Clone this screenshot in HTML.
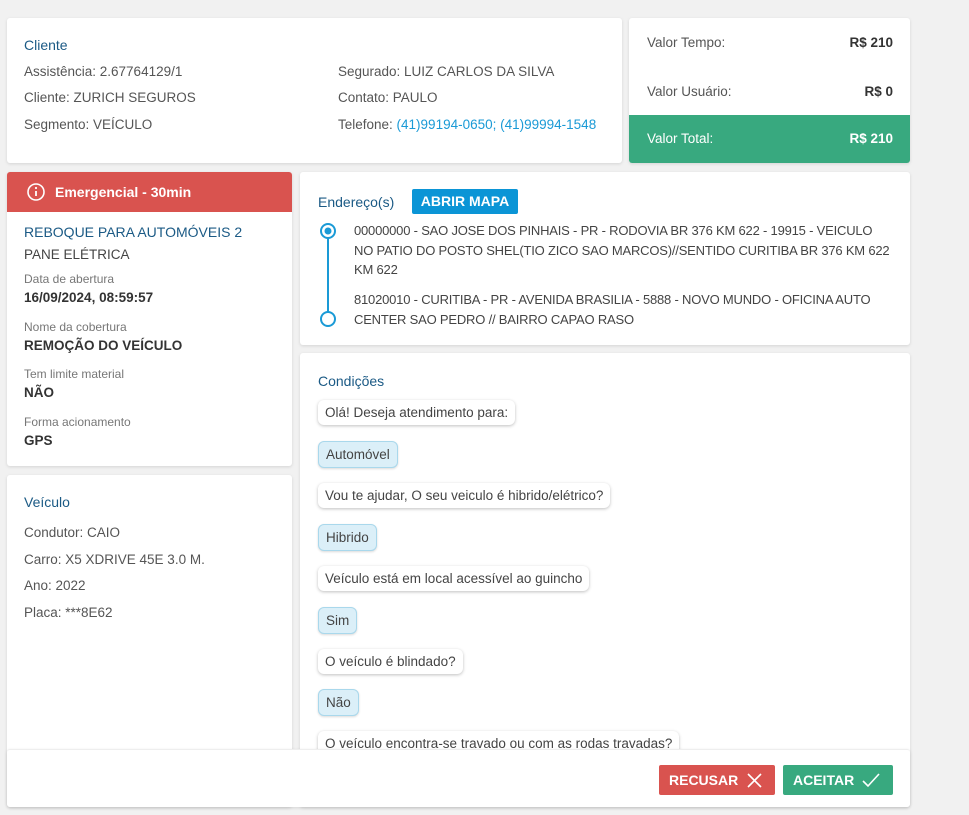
<!DOCTYPE html>
<html><head><meta charset="utf-8"><style>
*{box-sizing:border-box;margin:0;padding:0}
body{width:969px;height:815px;background:#f1f1f1;font-family:"Liberation Sans",sans-serif;font-size:13.5px;color:#555;position:relative;overflow:hidden}
.card{position:absolute;background:#fff;border-radius:3px;box-shadow:0 1px 3px rgba(0,0,0,.12)}
.t{position:absolute;white-space:nowrap}
.h{color:#1b5a85;font-size:14px}
.lbl{font-size:12px;color:#777}
.b{font-weight:bold;color:#333}
.link{color:#1a9ad6}
.bub{position:absolute;left:18px;padding:5px 7px;background:#fff;border-radius:6px;box-shadow:0 1px 3px rgba(0,0,0,.25);color:#444;white-space:nowrap}
.rep{background:#dbeff8;border:1px solid #a9d8ec;box-shadow:0 1px 2px rgba(0,0,0,.15)}
.addr{position:absolute;left:54px;width:538px;line-height:19.5px;color:#444;font-size:13px;letter-spacing:-0.2px}
</style></head><body>

<div class="card" style="left:7px;top:18px;width:615px;height:145px">
<div class="t h" style="left:17px;top:19px">Cliente</div>
<div class="t" style="left:17px;top:46px">Assistência: 2.67764129/1</div>
<div class="t" style="left:17px;top:72px">Cliente: ZURICH SEGUROS</div>
<div class="t" style="left:17px;top:99px">Segmento: VEÍCULO</div>
<div class="t" style="left:331px;top:46px">Segurado: LUIZ CARLOS DA SILVA</div>
<div class="t" style="left:331px;top:72px">Contato: PAULO</div>
<div class="t" style="left:331px;top:99px">Telefone: <span class="link">(41)99194-0650; (41)99994-1548</span></div>
</div>

<div class="card" style="left:629px;top:18px;width:281px;height:145px;overflow:hidden">
<div class="t" style="left:18px;top:17px">Valor Tempo:</div>
<div class="t b" style="right:17px;top:17px">R$ 210</div>
<div class="t" style="left:18px;top:66px">Valor Usuário:</div>
<div class="t b" style="right:17px;top:66px">R$ 0</div>
<div style="position:absolute;left:0;top:97px;width:281px;height:48px;background:#38a97f">
<div class="t" style="left:18px;top:16px;color:#fff">Valor Total:</div>
<div class="t" style="right:17px;top:16px;color:#fff;font-weight:bold">R$ 210</div>
</div>
</div>

<div class="card" style="left:7px;top:172px;width:285px;height:294px;overflow:hidden">
<div style="position:absolute;left:0;top:0;width:285px;height:40px;background:#d9534f">
<svg style="position:absolute;left:19px;top:10px" width="20" height="20" viewBox="0 0 20 20"><circle cx="10" cy="10" r="8" fill="none" stroke="#fff" stroke-width="1.6"/><line x1="10" y1="9" x2="10" y2="14" stroke="#fff" stroke-width="1.8"/><circle cx="10" cy="6" r="1.1" fill="#fff"/></svg>
<div class="t" style="left:48px;top:12px;color:#fff;font-weight:bold;font-size:14px">Emergencial - 30min</div>
</div>
<div class="t h" style="left:17px;top:52px">REBOQUE PARA AUTOMÓVEIS 2</div>
<div class="t" style="left:17px;top:75px;color:#444">PANE ELÉTRICA</div>
<div class="t lbl" style="left:17px;top:100px">Data de abertura</div>
<div class="t b" style="left:17px;top:118px">16/09/2024, 08:59:57</div>
<div class="t lbl" style="left:17px;top:148px">Nome da cobertura</div>
<div class="t b" style="left:17px;top:166px">REMOÇÃO DO VEÍCULO</div>
<div class="t lbl" style="left:17px;top:195px">Tem limite material</div>
<div class="t b" style="left:17px;top:213px">NÃO</div>
<div class="t lbl" style="left:17px;top:243px">Forma acionamento</div>
<div class="t b" style="left:17px;top:261px">GPS</div>
</div>

<div class="card" style="left:7px;top:475px;width:285px;height:332px">
<div class="t h" style="left:17px;top:19px">Veículo</div>
<div class="t" style="left:17px;top:50px">Condutor: CAIO</div>
<div class="t" style="left:17px;top:77px">Carro: X5 XDRIVE 45E 3.0 M.</div>
<div class="t" style="left:17px;top:103px">Ano: 2022</div>
<div class="t" style="left:17px;top:130px">Placa: ***8E62</div>
</div>

<div class="card" style="left:300px;top:172px;width:610px;height:173px">
<div class="t h" style="left:18px;top:22px">Endereço(s)</div>
<div style="position:absolute;left:112px;top:17px;width:106px;height:25px;background:#0b95d6;border-radius:2px;color:#fff;font-weight:bold;font-size:14px;text-align:center;line-height:25px">ABRIR MAPA</div>
<svg style="position:absolute;left:19px;top:50px" width="20" height="106"><circle cx="9" cy="9" r="7" fill="#fff" stroke="#1a9ad6" stroke-width="2"/><circle cx="9" cy="9" r="3.5" fill="#1a9ad6"/><line x1="9" y1="16" x2="9" y2="90" stroke="#1a9ad6" stroke-width="2"/><circle cx="9" cy="97" r="7" fill="#fff" stroke="#1a9ad6" stroke-width="2"/></svg>
<div class="addr" style="top:49px">00000000 - SAO JOSE DOS PINHAIS - PR - RODOVIA BR 376 KM 622 - 19915 - VEICULO NO PATIO DO POSTO SHEL(TIO ZICO SAO MARCOS)//SENTIDO CURITIBA BR 376 KM 622 KM 622</div>
<div class="addr" style="top:118px">81020010 - CURITIBA - PR - AVENIDA BRASILIA - 5888 - NOVO MUNDO - OFICINA AUTO CENTER SAO PEDRO // BAIRRO CAPAO RASO</div>
</div>

<div class="card" style="left:300px;top:353px;width:610px;height:454px;overflow:hidden">
<div class="t h" style="left:18px;top:20px">Condições</div>
<div class="bub" style="top:47px">Olá! Deseja atendimento para:</div>
<div class="bub rep" style="top:88px">Automóvel</div>
<div class="bub" style="top:130px">Vou te ajudar, O seu veiculo é hibrido/elétrico?</div>
<div class="bub rep" style="top:171px">Hibrido</div>
<div class="bub" style="top:213px">Veículo está em local acessível ao guincho</div>
<div class="bub rep" style="top:254px">Sim</div>
<div class="bub" style="top:296px">O veículo é blindado?</div>
<div class="bub rep" style="top:336px">Não</div>
<div class="bub" style="top:378px">O veículo encontra-se travado ou com as rodas travadas?</div>
</div>

<div class="card" style="left:7px;top:749px;width:903px;height:58px;border-top:1px solid #eee">
<div style="position:absolute;left:652px;top:15px;width:116px;height:30px;background:#d9534f;border-radius:2px;color:#fff;font-weight:bold;font-size:14px;line-height:30px;padding-left:10px">RECUSAR
<svg style="position:absolute;left:88px;top:8px" width="15" height="15"><path d="M1 1L14 14M14 1L1 14" stroke="#fff" stroke-width="1.6"/></svg></div>
<div style="position:absolute;left:776px;top:15px;width:110px;height:30px;background:#38a97f;border-radius:2px;color:#fff;font-weight:bold;font-size:14px;line-height:30px;padding-left:10px">ACEITAR
<svg style="position:absolute;left:79px;top:8px" width="18" height="15"><path d="M1 8L6 13L17 1" fill="none" stroke="#fff" stroke-width="1.6"/></svg></div>
</div>

</body></html>
